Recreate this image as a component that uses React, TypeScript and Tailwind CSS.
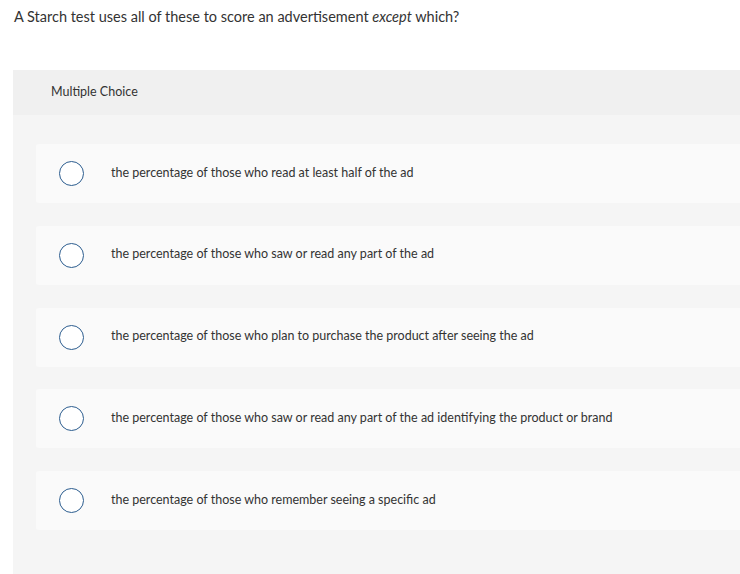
import React from 'react'

const options = [
  'the percentage of those who read at least half of the ad',
  'the percentage of those who saw or read any part of the ad',
  'the percentage of those who plan to purchase the product after seeing the ad',
  'the percentage of those who saw or read any part of the ad identifying the product or brand',
  'the percentage of those who remember seeing a specific ad',
]

export default function App() {
  return (
    <div className="min-h-[574px] bg-white text-[#333] font-['Lato','Liberation_Sans',sans-serif]">
      {/* Question */}
      <div className="pl-[14px] pt-[7px] h-[70px] text-[14.5px] leading-[20px]">
        A Starch test uses all of these to score an advertisement <em>except</em> which?
      </div>

      {/* Choices panel */}
      <div className="ml-[13px] bg-[#f5f5f5] min-h-[504px]">
        <div className="h-[45px] bg-[#f0f0f0] pl-[38px] pb-[1px] flex items-center text-[12.5px]">
          Multiple Choice
        </div>
        <div className="pt-[29px] pl-[23px] flex flex-col gap-[22.75px]">
          {options.map((o) => (
            <div key={o} className="h-[59px] bg-[#fafafa] rounded-l-[3px] flex items-center">
              <span className="ml-[23px] w-[25px] h-[25px] rounded-full border-[1.5px] border-[#2c5d8f] bg-white shrink-0" />
              <span className="ml-[27px] pb-[1px] text-[12.5px]">{o}</span>
            </div>
          ))}
        </div>
      </div>
    </div>
  )
}
